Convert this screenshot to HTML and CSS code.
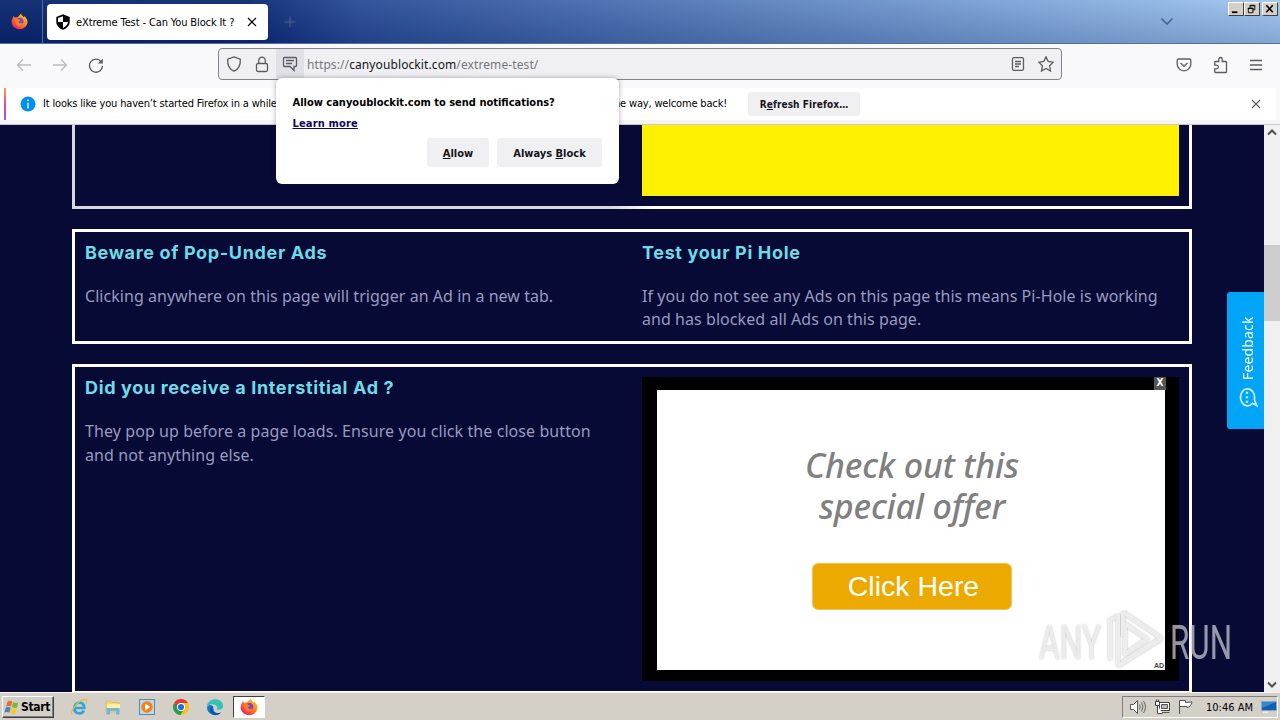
FILE: index.html
```html
<!DOCTYPE html>
<html lang="en">
<head>
<meta charset="utf-8">
<title>eXtreme Test - Can You Block It ?</title>
<link rel="stylesheet" href="styles.css">
</head>
<body>
<svg width="0" height="0" class="defs" aria-hidden="true">
  <defs>
    <linearGradient id="flame" x1="1" y1="0" x2="0.2" y2="1"><stop offset="0" stop-color="#ffe226"/><stop offset=".45" stop-color="#ff8a16"/><stop offset="1" stop-color="#f5156c"/></linearGradient>
    <symbol id="firefox" viewBox="0 0 18 18">
      <path fill="url(#flame)" d="M1.200 6.500 2.600 3.200l1.500 1.600 2.300-.3C7.800 4.300 8.300 2.500 10.800.4c.2 2 1.700 2.500 2.600 4l1-.9c2 2 3.200 3.900 3.100 6.700A8.500 8 0 0 1 .7 10.700c-.2-1.500 0-2.800.5-4.200z"/>
      <circle cx="9.300" cy="8.800" r="3.900" fill="#7448d8"/>
      <path fill="#ff7d1c" d="M4.200 6c2-.5 3.200-.3 4 .9L10 7.500c-.3 1.200-1.800 1.200-2.100 2.200.6 1.500 3.300 1.600 5 .6-.6 2.700-3 3.700-5.300 3.100C4.600 12.700 3.500 9 4.200 6z"/>
    </symbol>
    <symbol id="cross" viewBox="0 0 10 10"><path d="m1 1 8 8M9 1 1 9" fill="none" stroke="currentColor" stroke-width="1.200"/></symbol>
  </defs>
</svg>

<header class="titlebar">
  <div class="home"><svg width="17" height="17"><use href="#firefox"/></svg></div>
  <div class="tab">
    <svg width="16" height="16" viewBox="0 0 16 16"><path d="M8 .3 14.700 3v4.500c0 3.800-2.600 6.900-6.700 8.300C3.900 14.400 1.300 11.300 1.300 7.500V3z"/><path fill="#fff" d="M8 2.200V8h5c-.4 2.700-2.200 4.700-5 5.900V8H3V4.100z"/></svg>
    <span class="tab-title">eXtreme Test - Can You Block It ?</span>
    <svg class="tab-close" width="10" height="10"><use href="#cross"/></svg>
  </div>
  <svg class="newtab" width="12" height="12" viewBox="0 0 12 12"><path d="M6 .5v11M.5 6h11" stroke="#4d6485"/></svg>
  <svg class="all-tabs" width="14" height="9" viewBox="0 0 14 9"><path d="m1.500 1.500 5.500 5.500 5.500-5.500" fill="none" stroke="#46648f" stroke-width="1.600"/></svg>
  <div class="winbtns">
    <span class="winbtn"><svg width="15" height="13" viewBox="0 0 15 13"><path d="M3 9h6v2H3z"/></svg></span>
    <span class="winbtn"><svg width="15" height="13" viewBox="0 0 15 13"><path fill="none" stroke="#000" d="M5.500 5V2.500h5v5H8M5 3h6M3.500 5.500h5v5h-5zM3 6h6"/></svg></span>
    <span class="winbtn last"><svg width="15" height="13" viewBox="0 0 15 13"><path fill="none" stroke="#000" stroke-width="1.700" d="m3.500 2.500 7 7.500m0-7.500-7 7.500"/></svg></span>
  </div>
</header>

<nav class="toolbar">
  <div class="navbtns">
    <svg width="16" height="14" viewBox="0 0 16 14" class="dim"><path d="M15 7H1.500M7 1.500 1.500 7 7 12.500"/></svg>
    <svg width="16" height="14" viewBox="0 0 16 14" class="dim"><path d="M1 7h13.500M9 1.500 14.500 7 9 12.500"/></svg>
    <svg width="16" height="16" viewBox="0 0 16 16"><path d="M13.200 4.800A6.500 6.500 0 1 0 14.500 8.700"/><path class="solid" d="M14.800 1.500v5h-5z"/></svg>
  </div>
  <div class="urlbar">
    <svg class="shield" width="16" height="16" viewBox="0 0 16 16"><path d="M8 .9 14.300 3.200c.3 5.300-1.200 9.900-6.300 12-5.100-2.100-6.600-6.700-6.300-12z"/></svg>
    <svg class="lock" width="14" height="17" viewBox="0 0 14 17"><rect x="1.500" y="7.500" width="11" height="8" rx="1.500"/><path d="M3.700 7.500V4.800a3.300 3.600 0 0 1 6.600 0v2.700"/></svg>
    <span class="perm"><svg width="16" height="16" viewBox="0 0 16 16"><path d="M2.500 1.500h11a1 1 0 0 1 1 1v7a1 1 0 0 1-1 1H12V14.500L8 10.500H2.500a1 1 0 0 1-1-1v-7a1 1 0 0 1 1-1zM4 4.500h8M4 7.500h6"/></svg></span>
    <span class="url">https://<b>canyoublockit.com</b>/extreme-test/</span>
    <svg class="reader" width="14" height="14" viewBox="0 0 14 14"><rect x="1.500" y=".7" width="11" height="12.600" rx="1.500"/><path d="M4 4.500h6M4 7h6M4 9.500h4"/></svg>
    <svg width="16" height="16" viewBox="0 0 16 16"><path d="m8 .9 2.200 4.600 5 .7-3.600 3.600.9 5.200L8 12.500l-4.500 2.500.9-5.200L.8 6.200l5-.7z"/></svg>
  </div>
  <div class="tools">
    <svg width="16" height="14" viewBox="0 0 16 14"><path d="M2.500 1h11a1.300 1.300 0 0 1 1.300 1.300v4a6.800 6.500 0 0 1-13.600 0v-4A1.300 1.300 0 0 1 2.500 1zM4.500 5 8 8.300 11.500 5"/></svg>
    <svg width="16" height="18" viewBox="0 0 16 18"><path d="M1.700 8.500V6.300a.8.800 0 0 1 .8-.8h3.300V3.200a1.700 1.700 0 0 1 3.400 0v2.300h3.500a.8.800 0 0 1 .8.800v9.400a.8.800 0 0 1-.8.800H2.500a.8.800 0 0 1-.8-.8V12.800h1.800a1.800 1.800 0 0 0 0-3.700H1.700z"/></svg>
    <svg width="14" height="12" viewBox="0 0 14 12"><path d="M1 1.500h12M1 6h12M1 10.500h12"/></svg>
  </div>
</nav>

<aside class="infobar">
  <svg class="info" width="16" height="16" viewBox="0 0 16 16"><circle cx="8" cy="8" r="7.500" fill="#0090ed"/><path d="M8 3.500v1.700M8 6.800v5.700" stroke="#fff" stroke-width="1.300"/></svg>
  <span class="info-left">It looks like you haven’t started Firefox in a while</span>
  <span class="info-right">By the way, welcome back!</span>
  <button class="refresh">R<u>e</u>fresh Firefox…</button>
  <svg class="info-close" width="10" height="10"><use href="#cross"/></svg>
</aside>

<div class="viewport">
  <main class="page">
    <section class="box first"><div></div><div class="yellow"></div></section>
    <section class="box second">
      <div><h2>Beware of Pop-Under Ads</h2><p>Clicking anywhere on this page will trigger an Ad in a new tab.</p></div>
      <div><h2>Test your Pi Hole</h2><p class="tight">If you do not see any Ads on this page this means Pi-Hole is working<br>and has blocked all Ads on this page.</p></div>
    </section>
    <section class="box third">
      <div><h2>Did you receive a Interstitial Ad ?</h2><p class="wide">They pop up before a page loads. Ensure you click the close button<br>and not anything else.</p></div>
      <div class="ad">
        <span class="ad-x">X</span>
        <div class="ad-body">
          <div class="offer"><div>Check out this</div><div>special offer</div></div>
          <div class="cta">Click Here</div>
          <span class="ad-tag">AD</span>
        </div>
      </div>
    </section>
  </main>
  <div class="scrollbar">
    <svg width="10" height="7" viewBox="0 0 10 7"><path d="m1 5.500 4-4 4 4"/></svg>
    <span class="thumb"></span>
    <svg width="10" height="7" viewBox="0 0 10 7"><path d="m1 1.500 4 4 4-4"/></svg>
  </div>
  <div class="feedback">
    <span>Feedback</span>
    <svg width="20" height="21" viewBox="0 0 20 21"><path d="M14.500 16.300A7 8.500 0 1 1 16.300 12.500L18.700 18.500z"/><path class="dots" d="M9 4.800v2M9 9.300v2M9 13.800v2"/></svg>
  </div>
</div>

<div class="popup">
  <strong class="pop-title">Allow canyoublockit.com to send notifications?</strong>
  <a class="learn">Learn more</a>
  <div class="pop-actions"><button><u>A</u>llow</button><button>Always <u>B</u>lock</button></div>
</div>

<svg class="watermark" width="204" height="66" viewBox="0 0 204 66">
  <g class="wm-text"><text class="wm-any" x="3" y="53" textLength="62" lengthAdjust="spacingAndGlyphs">ANY</text><text x="134" y="53" textLength="62" lengthAdjust="spacingAndGlyphs">RUN</text></g>
  <path class="wm-logo" d="M74 54V14l8-4v50M87 6l38 26-38 24M87 6v24M89 18l22 15-22 15V18M82 60l43-27"/>
</svg>

<footer class="taskbar">
  <div class="start">
    <svg width="16" height="15" viewBox="0 0 16 15"><path fill="#ef6b2d" d="M3.500 1.500q2.500-1.300 4.700 0L7 6.500q-2.300-1-5 .2z"/><path fill="#7ab837" d="M9 2q2.600 1.500 5.300.5L13 7.500q-2.500 1-5.200-.6z"/><path fill="#3f85c9" d="M1.700 7.700q2.500-1.200 5 0L5.400 12.500Q3 11.400.4 12.600z"/><path fill="#f7c72c" d="M7.500 8.100q2.700 1.300 5.300.4l-1.300 5q-2.700 1-5.300-.6z"/></svg>
    <span>Start</span>
  </div>
  <div class="apps">
    <svg width="18" height="18" viewBox="0 0 18 18"><path d="M4 10h10.300c.4-7-9.800-7.300-10 0-.2 6.300 8 6.700 9.500 2.500" fill="none" stroke="#32a5df" stroke-width="2.700"/><path d="M2.200 16.500C-1 15.500 7 2.300 14.500 1.300c3-.2 2.800 2 1.500 4.300" fill="none" stroke="#e5bd3b" stroke-width="1.200"/></svg>
    <svg width="18" height="18" viewBox="0 0 18 18"><path fill="#f3d574" stroke="#d7b24c" stroke-width=".6" d="M2 3h5l1 1.500h7V14H2z"/><path fill="#fff0a6" d="M3 6h13v5H3z"/><path fill="#73b6d6" d="M2.500 10h13v6.500H12V13H6v3.500H2.500z"/></svg>
    <svg width="18" height="18" viewBox="0 0 18 18"><rect x="1.500" y="1.500" width="15" height="15" fill="#b9d8ea" stroke="#528cb2"/><circle cx="9" cy="9" r="5.700" fill="#f58213"/><path fill="#fff" d="m7.200 5.500 5 3.500-5 3.500z"/></svg>
    <svg width="18" height="18" viewBox="0 0 18 18"><circle cx="9" cy="9" r="8" fill="#fbc116"/><path fill="#e33b2e" d="M2.100 5A8 8 0 0 1 16 5H9v4l-3.500 2z"/><path fill="#2c9b4c" d="M2.100 5A8 8 0 0 0 8.500 17l3.300-5.500H7z"/><circle cx="9" cy="9" r="4" fill="#fff"/><circle cx="9" cy="9" r="3.100" fill="#1a73e8"/></svg>
    <svg width="18" height="18" viewBox="0 0 18 18"><path fill="#1479ca" d="M1 9a8 8 0 0 0 13.500 6c-4 1-7-1-7-4.500C7.500 7 3 5.500 1 9z"/><path fill="#0c4f9f" d="M7.500 8c-4 4 1.500 9.500 7.500 6.200-2 3-6.500 3.400-9 1.300C3 13 4 9 7.500 8z"/><path fill="#34c1b6" d="M1 9C1-1.200 17-1 17 8.200c0 4-6 4.300-6.300 2.600 1-.8.600-2.600-1-3.600C6.500 5.300 2 6 1 9z"/></svg>
    <span class="active"><svg width="18" height="18"><use href="#firefox"/></svg></span>
  </div>
  <div class="tray">
    <svg width="18" height="16" viewBox="0 0 18 16"><path fill="#fff" stroke="#555" d="M1.500 5.500h3l4-4v13l-4-4h-3z"/><path fill="none" stroke="#666" d="M10.500 5.500q1.500 2.500 0 5M12.500 3.500q3 4.500 0 9M14.500 2q4 6 0 12"/></svg>
    <svg width="17" height="16" viewBox="0 0 17 16"><path fill="#fff" stroke="#444" d="M5.500 3.500h10v8h-10z"/><path fill="#bbb" stroke="#555" d="M7.500 5.500h6v4h-6zM7.500 13.500h8"/><path fill="#fff" stroke="#444" d="M1.500 2.500h4v4h-4zM3.500 6.500v8h5M2.500.5v2M4.500.5v2"/></svg>
    <svg width="17" height="16" viewBox="0 0 17 16"><path fill="#fff" stroke="#555" d="M1.500 15V1.500h6v2l6.500-.5q-1 5-5 5.500v-1H1.500"/></svg>
    <span class="clock">10:46 AM</span>
    <svg width="16" height="14" viewBox="0 0 16 14"><path fill="#155fae" stroke="#7da8d0" d="M.5 1.500h15v9H.5z"/><path fill="#3a86cc" d="M1 2h14L1 8z"/><path fill="#eef" d="M2 11.500h5v1.500H2z"/></svg>
  </div>
</footer>
</body>
</html>
```
FILE: styles.css
```css
* { box-sizing: border-box; }
html, body { margin: 0; height: 720px; overflow: hidden; }
body { display: flex; flex-direction: column; width: 1280px; position: relative; font: 11px "DejaVu Sans Condensed", "DejaVu Sans", sans-serif; color: #000; }
svg { display: block; flex: none; }
.defs { position: absolute; }
button { border: 0; padding: 0; font: bold 11px "DejaVu Sans Condensed", "DejaVu Sans", sans-serif; background: #f0f0f2; color: #15141a; border-radius: 3px; white-space: nowrap; }
span, strong, h2, p { white-space: nowrap; }

.titlebar { height: 44px; flex: none; display: flex; align-items: center; background: linear-gradient(180deg, rgba(160,200,250,.08), rgba(0,20,90,.2)), linear-gradient(90deg, #0a246a 0, #0c2871 250px, #2b4b93 360px, #6b90c7 850px, #a6caf0 1280px); border-bottom: 1px solid #566e98; position: relative; }
.home { width: 43px; height: 43px; border-right: 1px solid #52689e; padding: 13px 0 0 11px; }
.tab { width: 221px; height: 36px; margin-left: 4px; background: #fff; border-radius: 4px; display: flex; align-items: center; padding-left: 8px; }
.tab-title { margin: 2px 0 0 5px; width: 166px; letter-spacing: -.12px; }
.tab-close { margin-left: 5px; }
.newtab { margin-left: 16px; }
.all-tabs { margin-left: 864px; }
.winbtns { position: absolute; top: 2px; right: 2px; display: flex; }
.winbtn { width: 16px; height: 14px; background: #d4d0c8; border: 1px solid; border-color: #fff #404040 #404040 #fff; }
.winbtn svg { width: 14px; height: 12px; }
.winbtn.last { margin-left: 2px; }

.toolbar { height: 44px; flex: none; background: #f9f9fb; display: flex; align-items: center; padding-bottom: 3px; }
.toolbar svg { fill: none; stroke: #5b5b66; stroke-width: 1.3; }
.toolbar svg.dim { stroke: #b9b9c0; }
.toolbar .solid { fill: #5b5b66; stroke: none; }
.navbtns { display: flex; gap: 20px; width: 218px; padding-left: 16px; align-items: center; }
.urlbar { width: 844px; height: 32px; margin-top: -1px; background: #f0f0f4; border: 1px solid #83838b; border-radius: 4px; display: flex; align-items: center; padding-left: 7px; }
.lock { margin-left: 13px; }
.perm { width: 28px; height: 30px; margin-left: 7px; background: #e0e0e6; display: grid; place-items: center; }
.url { font: 12px "Noto Sans", sans-serif; letter-spacing: .1px; margin-left: 3px; width: 704px; color: #777780; }
.url b { font-weight: 400; color: #15141a; }
.reader { margin-right: 13px; }
.tools { display: flex; align-items: center; gap: 21px; margin-left: 114px; }
.tools svg:last-child { margin-left: -1px; }

.infobar { height: 37px; flex: none; display: flex; align-items: center; margin: 0; padding: 0 0 5px 20px; background: #fff; border-bottom: 1px solid #c8c8ce; box-shadow: inset 0 -4px #f5f5f7, inset -4px 0 #f9f9fb; position: relative; }
.infobar::before { content: ""; position: absolute; left: 4px; top: 0; width: 2px; height: 32px; background: linear-gradient(#ff9a50, #f0478f 50%, #9059ff); }
.info-left { margin-left: 7px; width: 518px; letter-spacing: -.17px; }
.info-right { width: 166px; text-align: right; letter-spacing: -.17px; }
.refresh { width: 112px; height: 24px; margin-left: 21px; font-size: 10px; letter-spacing: .1px; padding-top: 1px; }
.info-close { color: #5b5b66; margin-left: 391px; }

.viewport { height: 567px; flex: none; display: flex; background: #060a35; position: relative; overflow: hidden; }
.page { width: 1264px; padding: 0 72px; display: flex; flex-direction: column; gap: 20px; }
.box { flex: none; border: 3px solid #fff; padding: 10px; display: grid; grid-template-columns: 537px 537px; gap: 20px; }
.first { height: 84px; border-top: 0; padding-top: 0; border-left-color: #dcdde8; border-image: linear-gradient(90deg, #d6d7e2 540px, #fff 580px) 3; border-image-width: 0 3px 3px; }
.yellow { background: #fff200; height: 71px; }
.second { height: 115px; }
.third { height: 330px; }
h2 { margin: 0; font: bold 18px/22px Inter, sans-serif; letter-spacing: .65px; color: #6fdbe8; }
p { margin: 21px 0 0; font: 16px/23.5px "Noto Sans", sans-serif; letter-spacing: .04px; color: #9a9bc0; }
.tight { line-height: 23px; letter-spacing: .06px; }
.wide { letter-spacing: .08px; }
.ad { background: #000; height: 304px; padding: 13px 13px 11px 15px; position: relative; }
.ad-x { position: absolute; right: 13px; top: 0; width: 12px; height: 13px; background: #555; color: #fff; font: bold 10px/12px "DejaVu Sans Condensed", "DejaVu Sans", sans-serif; text-align: center; }
.ad-body { background: #fff; height: 280px; width: 508px; position: relative; display: flex; flex-direction: column; align-items: center; padding: 55px 0 0 2px; }
.offer { font: italic 500 34px/41px "Noto Sans", sans-serif; letter-spacing: -.17px; color: #808080; text-align: center; white-space: nowrap; }
.cta { width: 200px; height: 47px; margin-top: 36px; padding-left: 3px; background: #eca900; border: 1px solid #f2c458; border-radius: 6px; color: #fff; font: 28.5px/45px "Liberation Sans", sans-serif; text-align: center; }
.ad-tag { position: absolute; right: 1px; bottom: 0; font: bold 7px/9px "Liberation Sans", sans-serif; color: #444; }
.scrollbar { width: 16px; background: #f0f0f0; display: flex; flex-direction: column; align-items: center; padding: 4px 0; }
.scrollbar svg { fill: none; stroke: #505050; stroke-width: 2; }
.thumb { width: 16px; height: 76px; margin: 109px 0 auto; background: #cdcdcd; }
.feedback { position: absolute; left: 1227px; top: 167px; width: 37px; height: 137px; background: #00a5f8; border-radius: 3px 0 0 3px; display: flex; flex-direction: column; align-items: center; padding: 24px 0 0 4px; gap: 7px; }
.feedback span { writing-mode: vertical-rl; transform: rotate(180deg); font: 14px/20px "Noto Sans", sans-serif; letter-spacing: .15px; height: 64px; color: #fff; }
.feedback svg { fill: none; stroke: #c9edff; stroke-width: 1.7; }
.feedback .dots { stroke-width: 2.4; }

.popup { position: absolute; left: 276px; top: 78px; width: 343px; height: 106px; background: #fff; border-radius: 6px; box-shadow: 0 0 5px rgba(20,20,40,.35); padding: 18px 17px 0 16.5px; display: flex; flex-direction: column; }
.pop-title { line-height: 14px; }
.learn { font-weight: bold; color: #0b0766; text-decoration: underline; line-height: 14px; margin-top: 7px; letter-spacing: .15px; }
.pop-actions { display: flex; justify-content: flex-end; gap: 8px; margin-top: 7px; }
.pop-actions button { height: 29px; width: 62px; padding-top: 1px; }
.pop-actions button + button { width: 105px; }

.watermark { position: absolute; left: 1036px; top: 606px; filter: drop-shadow(0 0 1px rgba(70,70,70,.45)); }
.wm-text { font: 49px Roboto, sans-serif; fill: rgba(225,225,232,.64); }
.wm-any { fill: rgba(245,245,245,.75); }
.wm-logo { fill: none; stroke: rgba(245,245,246,.85); stroke-width: 4; stroke-linejoin: round; }

.taskbar { height: 28px; flex: none; background: #d4d0c8; border-top: 1px solid #f4f2ee; display: flex; align-items: center; padding: 1px 2px 0; }
.start { width: 52px; height: 22px; border: 1px solid; border-color: #fff #404040 #404040 #fff; box-shadow: inset -1px -1px #808080; display: flex; align-items: center; gap: 1px; padding-left: 1px; font-weight: bold; font-size: 12px; letter-spacing: -.3px; }
.apps { display: flex; align-items: center; gap: 16px; margin-left: 16px; }
.active { width: 32px; height: 22px; background: #fff; border: 1px solid; border-color: #404040 #fff #fff #404040; display: grid; place-items: center; margin-left: -7px; }
.tray { margin-left: auto; width: 156px; height: 22px; border: 1px solid; border-color: #808080 #fff #fff #808080; display: flex; align-items: center; gap: 7px; padding-left: 6px; }
.clock { width: 49px; margin-left: 4px; }
```
